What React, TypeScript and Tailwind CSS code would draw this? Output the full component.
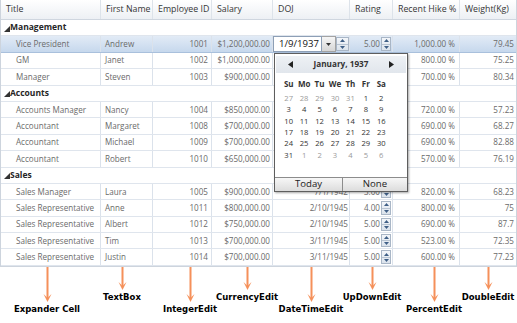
import React from 'react';

type Row = string[];

// rows whose DOJ / Rating cells sit under the open date picker
const COVERED = new Set(['Janet', 'Steven', 'Nancy', 'Margaret', 'Michael', 'Robert']);

const GROUPS: { name: string; rows: Row[] }[] = [
  {
    name: 'Management',
    rows: [
      ['Vice President', 'Andrew', '1001', '$1,200,000.00', '1/9/1937', '5.00', '1,000.00 %', '79.45'],
      ['GM', 'Janet', '1002', '$1,000,000.00', '8/30/1938', '5.00', '800.00 %', '75.25'],
      ['Manager', 'Steven', '1003', '$900,000.00', '3/4/1942', '4.00', '700.00 %', '80.34'],
    ],
  },
  {
    name: 'Accounts',
    rows: [
      ['Accounts Manager', 'Nancy', '1004', '$850,000.00', '5/1/1942', '4.00', '720.00 %', '57.23'],
      ['Accountant', 'Margaret', '1008', '$700,000.00', '5/3/1943', '3.00', '690.00 %', '68.27'],
      ['Accountant', 'Michael', '1009', '$700,000.00', '10/17/1943', '4.00', '690.00 %', '82.88'],
      ['Accountant', 'Robert', '1010', '$650,000.00', '1/2/1944', '5.00', '570.00 %', '76.19'],
    ],
  },
  {
    name: 'Sales',
    rows: [
      ['Sales Manager', 'Laura', '1005', '$900,000.00', '7/1/1942', '3.00', '820.00 %', '68.23'],
      ['Sales Representative', 'Anne', '1011', '$800,000.00', '2/10/1945', '4.00', '800.00 %', '75'],
      ['Sales Representative', 'Albert', '1012', '$750,000.00', '2/10/1945', '5.00', '690.00 %', '87.7'],
      ['Sales Representative', 'Tim', '1013', '$700,000.00', '3/11/1945', '5.00', '523.00 %', '72.35'],
      ['Sales Representative', 'Justin', '1014', '$700,000.00', '3/11/1945', '5.00', '600.00 %', '77.23'],
    ],
  },
];

const HEADERS = ['Title', 'First Name', 'Employee ID', 'Salary', 'DOJ', 'Rating', 'Recent Hike %', 'Weight(Kg)'];
const WIDTHS = ['w-[100px]', 'w-[52px]', 'w-[59px]', 'w-[61px]', 'w-[77px]', 'w-[43px]', 'w-[67px]', 'w-[56px]'];

const DAYS = ['Su', 'Mo', 'Tu', 'We', 'Th', 'Fr', 'Sa'];
const DATES: [number, boolean][] = [
  [27, false], [28, false], [29, false], [30, false], [31, false], [1, true], [2, true],
  ...Array.from({ length: 28 }, (_, i) => [i + 3, true] as [number, boolean]),
  [31, true], [1, false], [2, false], [3, false], [4, false], [5, false], [6, false],
];

const NOTES = [
  { label: 'Expander Cell', gap: 'ml-[47px]', long: true },
  { label: 'TextBox', gap: 'ml-[75px]', long: false },
  { label: 'IntegerEdit', gap: 'ml-[68px]', long: true },
  { label: 'CurrencyEdit', gap: 'ml-[57px]', long: false },
  { label: 'DateTimeEdit', gap: 'ml-[64px]', long: true },
  { label: 'UpDownEdit', gap: 'ml-[61px]', long: false },
  { label: 'PercentEdit', gap: 'ml-[62px]', long: true },
  { label: 'DoubleEdit', gap: 'ml-[54px]', long: false },
];

function Tri({ up, color = '#3f5f86' }: { up?: boolean; color?: string }) {
  return (
    <svg width="5" height="3" viewBox="0 0 5 3">
      <polygon points={up ? '0,3 5,3 2.5,0' : '0,0 5,0 2.5,3'} fill={color} />
    </svg>
  );
}

function Spinner({ wide }: { wide?: boolean }) {
  return (
    <div
      className={`${wide ? 'w-[13px]' : 'w-[10px]'} my-[1px] flex flex-col border border-[#a9b6c6] bg-linear-to-b from-[#f3f6fa] to-[#dbe3ec]`}
    >
      <div className="flex-1 flex items-center justify-center border-b border-[#b8c4d2]">
        <Tri up />
      </div>
      <div className="flex-1 flex items-center justify-center">
        <Tri />
      </div>
    </div>
  );
}

function Arrow({ long }: { long: boolean }) {
  const h = long ? 35 : 23;
  return (
    <svg width="9" height={h} viewBox={`0 0 9 ${h}`}>
      <rect x="3.5" y="0" width="2" height={h - 4} fill="#f5905a" />
      <polygon points={`0.5,${h - 8} 4.5,${h - 4} 8.5,${h - 8} 4.5,${h}`} fill="#f5905a" />
    </svg>
  );
}

function DataRow({ row, selected }: { row: Row; selected: boolean }) {
  const covered = COVERED.has(row[1]);
  return (
    <div
      className={`h-[16.4px] flex border-b ${
        selected
          ? 'bg-linear-to-b from-[#e2ebf6] to-[#c6d8ed] border-[#a9c0dc]'
          : 'bg-white border-[#dfe5ed]'
      }`}
    >
      <div className={`${WIDTHS[0]} pl-[15px] flex items-center border-r border-[#dbe2eb] whitespace-nowrap overflow-hidden`}>
        {row[0]}
      </div>
      <div className={`${WIDTHS[1]} pl-[4px] flex items-center border-r border-[#dbe2eb] whitespace-nowrap`}>{row[1]}</div>
      <div className={`${WIDTHS[2]} pr-[3px] flex items-center justify-end border-r border-[#dbe2eb]`}>{row[2]}</div>
      <div className={`${WIDTHS[3]} pr-[2px] flex items-center justify-end border-r border-[#dbe2eb] whitespace-nowrap`}>{row[3]}</div>
      {selected ? (
        <div className={`${WIDTHS[4]} flex border-r border-[#dbe2eb]`}>
          <div className="flex-1 bg-white border border-[#8d9fb6] flex items-center justify-end pr-[2px] text-[#111] text-[9.6px]">
            {row[4]}
          </div>
          <div className="w-[14px] border-y border-r border-[#a3a3a3] bg-linear-to-b from-[#f6f6f6] to-[#d6d6d6] flex items-center justify-center">
            <Tri color="#333" />
          </div>
          <Spinner wide />
        </div>
      ) : (
        <div className={`${WIDTHS[4]} pr-[1px] flex items-center justify-end border-r border-[#dbe2eb]`}>
          {covered ? '' : row[4]}
        </div>
      )}
      <div className={`${WIDTHS[5]} pr-[1px] flex items-stretch justify-end gap-[1px] border-r border-[#dbe2eb]`}>
        {!covered && (
          <>
            <span className="self-center">{row[5]}</span>
            <Spinner />
          </>
        )}
      </div>
      <div className={`${WIDTHS[6]} pr-[4px] flex items-center justify-end border-r border-[#dbe2eb] whitespace-nowrap`}>{row[6]}</div>
      <div className={`${WIDTHS[7]} pr-[2px] flex items-center justify-end`}>{row[7]}</div>
    </div>
  );
}

export default function App() {
  return (
    <div className="relative w-[517px] h-[323px] bg-white overflow-hidden font-['Open_Sans','Noto_Sans',sans-serif] text-[8.1px] text-[#6a6a6a]">
      {/* grid */}
      <div className="border-x border-b border-[#cdd4dd]">
        <div className="h-[20px] flex bg-linear-to-b from-white to-[#edf0f4] border-b border-[#cfd6df] text-[8.8px] text-[#363636]">
          {HEADERS.map((h, i) => (
            <div
              key={h}
              className={`${WIDTHS[i]} pl-[5px] flex items-center whitespace-nowrap ${i < 7 ? 'border-r border-[#dde3ea]' : ''}`}
            >
              {h}
            </div>
          ))}
        </div>
        {GROUPS.map((g) => (
          <React.Fragment key={g.name}>
            <div className="h-[16.4px] flex items-center pl-[3px] border-b border-[#dfe5ed] bg-white">
              <svg width="6" height="6" viewBox="0 0 6 6" className="mt-[2px]">
                <polygon points="6,0 6,6 0,6" fill="#333" />
              </svg>
              <span className="font-bold text-[8.5px] text-[#262626] leading-none">{g.name}</span>
            </div>
            {g.rows.map((r, i) => (
              <DataRow key={r[1]} row={r} selected={g.name === 'Management' && i === 0} />
            ))}
          </React.Fragment>
        ))}
      </div>

      {/* callouts */}
      <div className="flex items-start font-['DejaVu_Sans',sans-serif] font-bold text-[8.5px] leading-[10px] text-black">
        {NOTES.map((n) => (
          <div key={n.label} className={`${n.gap} w-0 flex flex-col items-center`}>
            <Arrow long={n.long} />
            <div className="mt-[2px] whitespace-nowrap">{n.label}</div>
          </div>
        ))}
      </div>

      {/* date picker popup */}
      <div className="absolute left-[274px] top-[53px] w-[134px] h-[139px] flex flex-col bg-white border border-[#5e5e5e] shadow-[1px_1px_2px_rgba(0,0,0,0.35)] text-[#333]">
        <div className="mx-[1px] mt-[2px] h-[17px] flex items-center justify-between px-[12px] bg-linear-to-b from-[#eef1f5] to-[#e1e6ec]">
          <svg width="5" height="7" viewBox="0 0 5 7">
            <polygon points="5,0 5,7 0,3.5" fill="#222" />
          </svg>
          <span className="font-bold text-[8.2px] text-[#333]">January, 1937</span>
          <svg width="5" height="7" viewBox="0 0 5 7">
            <polygon points="0,0 0,7 5,3.5" fill="#222" />
          </svg>
        </div>
        <div className="ml-[6px] mt-[5px] w-[108px] grid grid-cols-7">
          {DAYS.map((d) => (
            <div key={d} className="h-[12px] leading-none flex items-center justify-center font-bold text-[8px] text-[#333]">
              {d}
            </div>
          ))}
        </div>
        <div className="ml-[6px] mt-[3px] w-[108px] grid grid-cols-7">
          {DATES.map(([d, cur], i) => (
            <div
              key={i}
              className={`h-[11.4px] leading-none flex items-center justify-center text-[7.6px] ${cur ? 'text-[#333]' : 'text-[#9a9a9a]'}`}
            >
              {d}
            </div>
          ))}
        </div>
        <div className="mt-auto h-[14px] flex text-[9.6px] text-[#222]">
          <div className="w-[68px] flex items-center justify-center border-t border-r border-[#8c8c8c] bg-linear-to-b from-[#f7f7f7] to-[#dcdcdc]">
            Today
          </div>
          <div className="flex-1 flex items-center justify-center border-t border-[#8c8c8c] bg-linear-to-b from-[#f7f7f7] to-[#dcdcdc]">
            None
          </div>
        </div>
      </div>
    </div>
  );
}
